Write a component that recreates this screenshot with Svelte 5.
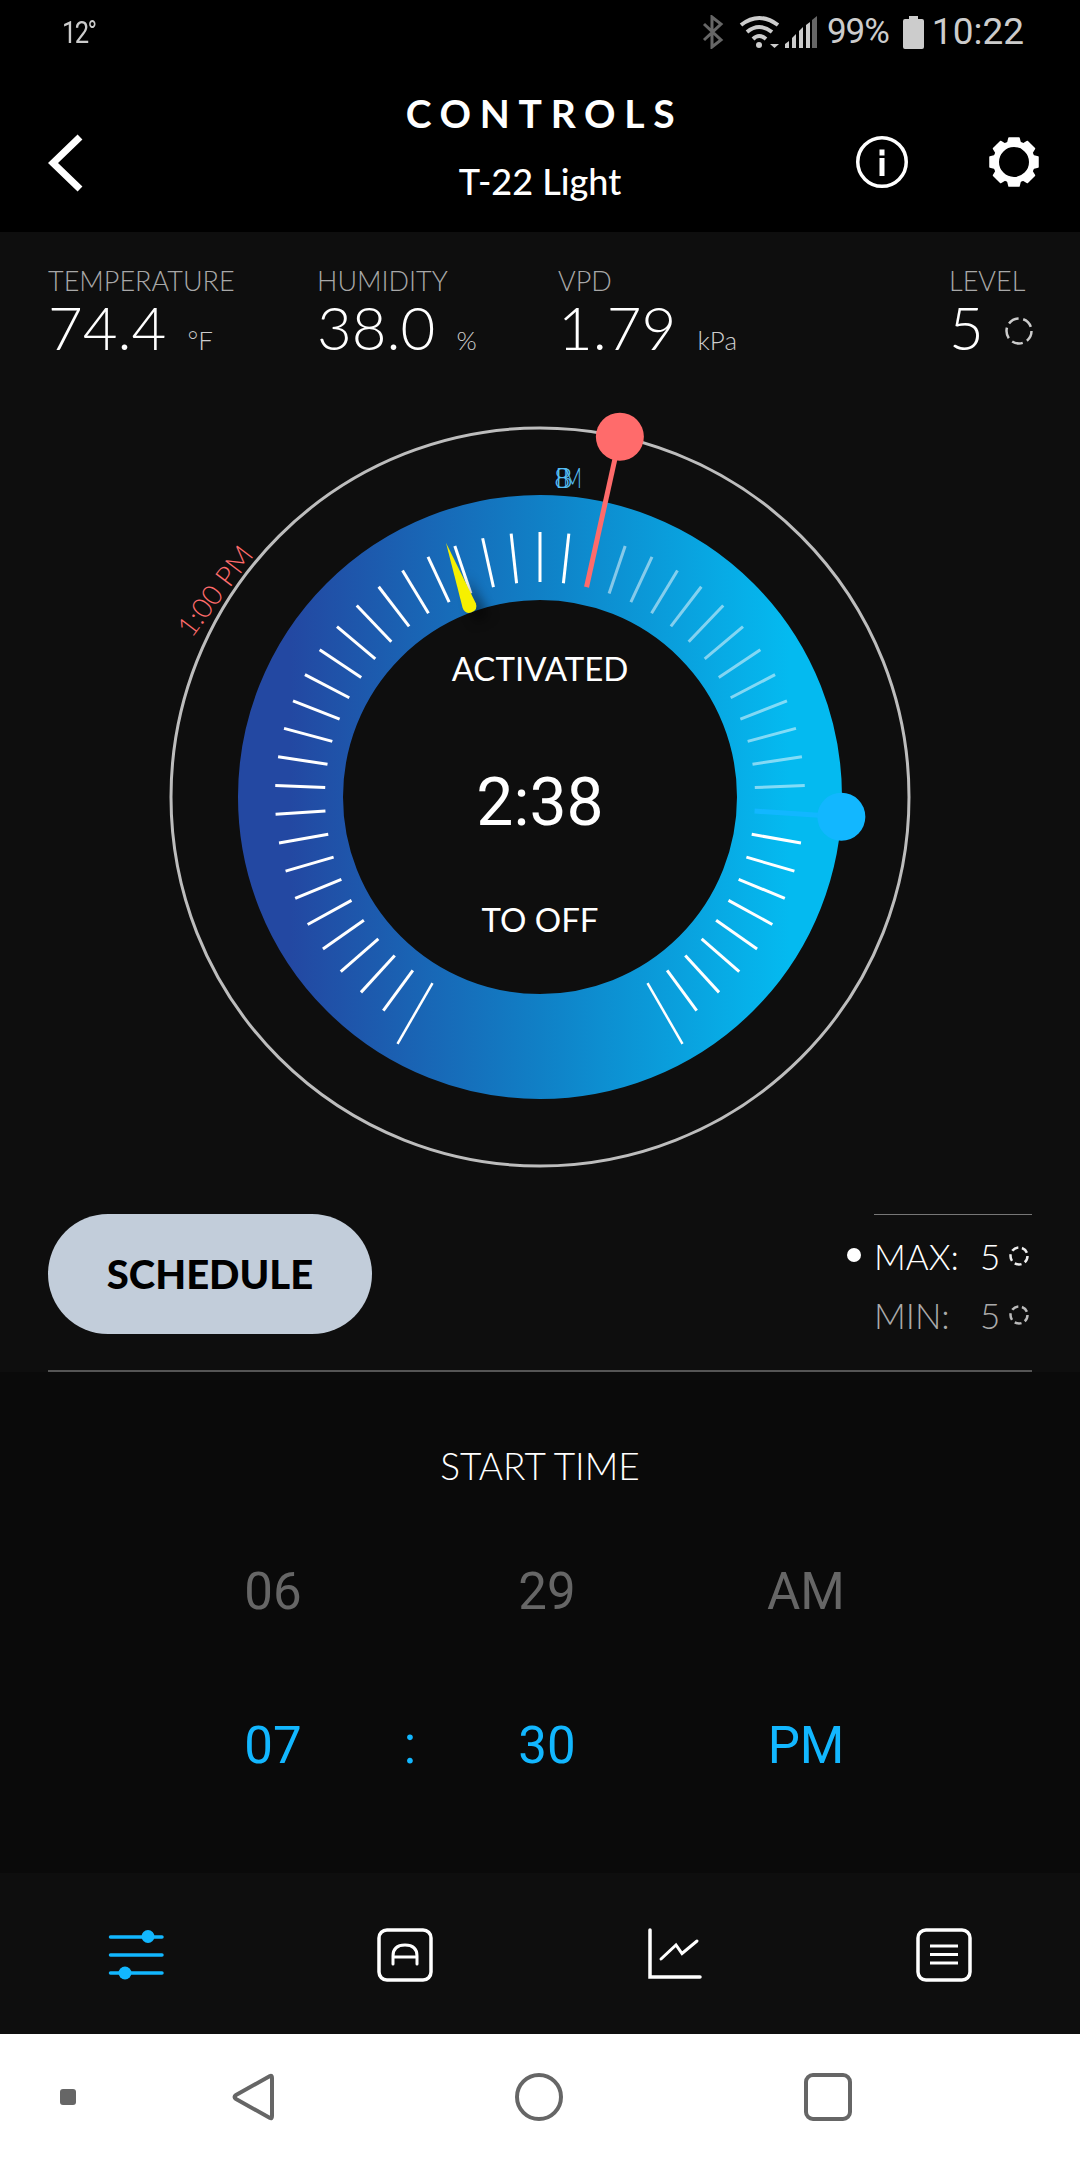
<script>
  const cx = 400
  const cy = 400

  // dial ticks run from -150deg to 150deg, one every 6.25deg
  const ticks = []
  for (let i = -24; i <= 24; i++) {
    const deg = i * 6.25
    const long = Math.abs(i) === 24
    ticks.push({
      ...polarLine(deg, 215, long ? 285 : 265),
      dim: i >= 2 && i <= 14,
      hide: i === 2 || i === 15,
      thin: long
    })
  }

  function polar(deg, r) {
    const a = (deg * Math.PI) / 180
    return { x: cx + r * Math.sin(a), y: cy - r * Math.cos(a) }
  }

  function polarLine(deg, r1, r2) {
    const a = polar(deg, r1)
    const b = polar(deg, r2)
    return { x1: a.x, y1: a.y, x2: b.x, y2: b.y }
  }

  const red = polarLine(12.5, 215, 369)
  const redDot = polar(12.5, 369)
  const blue = polarLine(93.75, 215, 302)
  const blueDot = polar(93.75, 302)

  const stats = [
    { label: 'TEMPERATURE', value: '74.4', unit: '°F', cls: 'temp' },
    { label: 'HUMIDITY', value: '38.0', unit: '%', cls: 'hum' },
    { label: 'VPD', value: '1.79', unit: 'kPa', cls: 'vpd' }
  ]
</script>

<div class="screen">
  <header class="top">
    <div class="status">
      <span class="temp-out">12°</span>
      <div class="status-right">
        <svg class="bt" width="22" height="34" viewBox="0 0 22 34">
          <path d="M2 9 L19 25 L10 32 V2 L19 9 L2 25" fill="none" stroke="#666" stroke-width="3" />
        </svg>
        <svg class="wifi" width="42" height="34" viewBox="0 0 42 34">
          <path d="M2 10 Q20 -4 39 10" fill="none" stroke="#ccc" stroke-width="4" />
          <path d="M8 17 Q20 7 33 17" fill="none" stroke="#ccc" stroke-width="4" />
          <path d="M14 24 Q20 18 27 24" fill="none" stroke="#ccc" stroke-width="4" />
          <circle cx="20" cy="30" r="3" fill="#ccc" />
          <path d="M31 29 H40 L35.5 33 Z" fill="#ccc" />
        </svg>
        <svg class="signal" width="32" height="32" viewBox="0 0 32 32">
          <path d="M0 32 V28 L4 25 V32 Z M7 32 V22 L11 18 V32 Z M14 32 V15 L18 11 V32 Z M21 32 V9 L25 6 V32 Z" fill="#ccc" />
          <path d="M27 32 V4 L32 0 V32 Z" fill="#666" />
        </svg>
        <span class="pct">99%</span>
        <svg class="batt" width="21" height="33" viewBox="0 0 21 33">
          <path d="M6 0 H15 V3 H19 Q21 3 21 5 V31 Q21 33 19 33 H2 Q0 33 0 31 V5 Q0 3 2 3 H6 Z" fill="#ccc" />
        </svg>
        <span class="clock">10:22</span>
      </div>
    </div>
    <div class="titlebar">
      <svg class="back" width="36" height="58" viewBox="0 0 36 58">
        <path d="M32 3 L5 29 L32 55" fill="none" stroke="#fff" stroke-width="7" />
      </svg>
      <div class="title">
        <h1>CONTROLS</h1>
        <p>T-22 Light</p>
      </div>
      <div class="actions">
        <svg width="54" height="54" viewBox="0 0 54 54">
          <circle cx="27" cy="27" r="24.25" fill="none" stroke="#fff" stroke-width="3.5" />
          <rect x="24.5" y="14.5" width="5" height="6" fill="#fff" />
          <rect x="24.5" y="23" width="5" height="18" fill="#fff" />
        </svg>
        <svg width="54" height="54" viewBox="0 0 54 54">
          <g fill="#fff" stroke="#fff" stroke-width="1.5" stroke-linejoin="round">
            {#each [0, 45, 90, 135, 180, 225, 270, 315] as a}
              <path d="M20 11 L22 3 H32 L34 11 Z" transform="rotate({a} 27 27)" />
            {/each}
          </g>
          <circle cx="27" cy="27" r="18" fill="none" stroke="#fff" stroke-width="6" />
        </svg>
      </div>
    </div>
  </header>

  <section class="upper">
    <div class="stats">
      {#each stats as s}
        <div class="stat {s.cls}">
          <span class="label">{s.label}</span>
          <div class="reading"><span class="value">{s.value}</span><span class="unit">{s.unit}</span></div>
        </div>
      {/each}
      <div class="stat level">
        <span class="label">LEVEL</span>
        <div class="reading">
          <span class="value">5</span>
          <svg class="spinner" width="30" height="30" viewBox="0 0 30 30">
            <circle cx="15" cy="15" r="12.5" fill="none" stroke="#ccc" stroke-width="2.5" stroke-dasharray="11 4.7" />
          </svg>
        </div>
      </div>
    </div>

    <svg class="dial" width="800" height="800" viewBox="0 0 800 800">
      <defs>
        <linearGradient id="ring" x1="0" y1="0" x2="1" y2="0">
          <stop offset="0" stop-color="#2348a2" />
          <stop offset="0.5" stop-color="#1080c6" />
          <stop offset="1" stop-color="#04baf0" />
        </linearGradient>
        <filter id="soft" x="-100%" y="-50%" width="300%" height="200%">
          <feGaussianBlur stdDeviation="6" />
        </filter>
      </defs>

      <circle {cx} {cy} r="369" fill="none" stroke="#bdbdbd" stroke-width="3" />
      <circle {cx} {cy} r="249.5" fill="none" stroke="url(#ring)" stroke-width="105" />

      {#each ticks as t}
        {#if !t.hide}
          <line
            x1={t.x1}
            y1={t.y1}
            x2={t.x2}
            y2={t.y2}
            stroke="#fff"
            stroke-width={t.thin ? 2.5 : 3}
            opacity={t.dim ? 0.5 : 1}
          />
        {/if}
      {/each}

      <text class="mark red-mark" transform="translate(83 200) rotate(-53)" text-anchor="middle">1:00 PM</text>
      <text class="mark blue-mark" x="414" y="91">8</text>
      <text class="mark blue-mark" x="415" y="91">B</text>
      <text class="mark blue-mark" transform="translate(423 91) scale(0.75 1)">M</text>

      <g transform="rotate(-20.3 400 400)">
        <path d="M392 205 L408 205 L400 160 Z" fill="#000" opacity="0.5" filter="url(#soft)" transform="translate(7 8)" />
        <path d="M400 129 L407 196 Q407 203 400 203 Q393 203 393 196 Z" fill="#f7f000" />
      </g>

      <line x1={red.x1} y1={red.y1} x2={red.x2} y2={red.y2} stroke="#ff6b6b" stroke-width="5" />
      <circle cx={redDot.x} cy={redDot.y} r="24" fill="#ff6b6b" />

      <line x1={blue.x1} y1={blue.y1} x2={blue.x2} y2={blue.y2} stroke="#12b7ff" stroke-width="5" />
      <circle cx={blueDot.x} cy={blueDot.y} r="24" fill="#12b7ff" />

      <text class="center-label" x="400" y="284" text-anchor="middle">ACTIVATED</text>
      <text class="center-time" x="400" y="428" text-anchor="middle">2:38</text>
      <text class="center-label" x="400" y="535" text-anchor="middle">TO OFF</text>
    </svg>

    <div class="actions-row">
      <button class="schedule">SCHEDULE</button>
      <div class="limits">
        <div class="limit active">
          <span class="dot"></span>
          <span class="name">MAX:</span>
          <span class="num">5</span>
          <svg width="22" height="22" viewBox="0 0 22 22">
            <circle cx="11" cy="11" r="8.5" fill="none" stroke="#eee" stroke-width="2.5" stroke-dasharray="7 3.7" />
          </svg>
        </div>
        <div class="limit">
          <span class="name">MIN:</span>
          <span class="num">5</span>
          <svg width="22" height="22" viewBox="0 0 22 22">
            <circle cx="11" cy="11" r="8.5" fill="none" stroke="#bbb" stroke-width="2.5" stroke-dasharray="7 3.7" />
          </svg>
        </div>
      </div>
    </div>
    <div class="rule"></div>
  </section>

  <section class="picker">
    <h2>START TIME</h2>
    <div class="wheel">
      <span>06</span><span></span><span>29</span><span>AM</span>
      <span class="on">07</span><span class="on">:</span><span class="on">30</span><span class="on">PM</span>
    </div>
  </section>

  <nav class="tabs">
    <svg width="56" height="54" viewBox="0 0 56 54">
      <g stroke="#12b7ff" stroke-width="3.5" stroke-linecap="round">
        <line x1="2.5" y1="9" x2="54" y2="9" />
        <line x1="2.5" y1="27" x2="54" y2="27" />
        <line x1="2.5" y1="45" x2="54" y2="45" />
      </g>
      <circle cx="40" cy="8.5" r="6.5" fill="#12b7ff" />
      <circle cx="17" cy="45" r="6.5" fill="#12b7ff" />
    </svg>
    <svg width="56" height="54" viewBox="0 0 56 54">
      <rect x="2" y="2" width="52" height="50" rx="8" fill="none" stroke="#fff" stroke-width="3.5" />
      <path d="M16 36 V28 Q16 17 28 17 Q40 17 40 28 V36 M16 29 H40" fill="none" stroke="#fff" stroke-width="3" stroke-linecap="round" />
    </svg>
    <svg width="56" height="54" viewBox="0 0 56 54">
      <path d="M3 2 V49 H53" fill="none" stroke="#fff" stroke-width="3.5" stroke-linecap="round" />
      <path d="M14 31 L29 17 L35 25.5 L50 13" fill="none" stroke="#fff" stroke-width="3" stroke-linecap="round" />
    </svg>
    <svg width="56" height="54" viewBox="0 0 56 54">
      <rect x="2" y="2" width="52" height="50" rx="8" fill="none" stroke="#fff" stroke-width="3.5" />
      <g stroke="#fff" stroke-width="3">
        <line x1="14" y1="18" x2="42" y2="18" />
        <line x1="14" y1="26.5" x2="42" y2="26.5" />
        <line x1="14" y1="35" x2="42" y2="35" />
      </g>
    </svg>
  </nav>

  <footer class="sysnav">
    <span class="pip"></span>
    <svg class="nav-back" width="42" height="48" viewBox="0 0 42 48">
      <path d="M38 3 Q40 2 40 5 V43 Q40 46 38 45 L4 26 Q1 24 4 22 Z" fill="none" stroke="#666" stroke-width="4" stroke-linejoin="round" />
    </svg>
    <svg class="nav-home" width="48" height="48" viewBox="0 0 48 48">
      <circle cx="24" cy="24" r="22" fill="none" stroke="#666" stroke-width="4" />
    </svg>
    <svg class="nav-recent" width="48" height="48" viewBox="0 0 48 48">
      <rect x="2" y="2" width="44" height="44" rx="7" fill="none" stroke="#666" stroke-width="4" />
    </svg>
  </footer>
</div>

<style>
  :global(body) {
    margin: 0;
    background: #000;
  }

  .screen {
    width: 1080px;
    height: 2160px;
    display: flex;
    flex-direction: column;
    overflow: hidden;
    font-family: Lato, "Noto Sans", sans-serif;
    color: #fff;
  }

  .top {
    height: 232px;
    background: #000;
    box-sizing: border-box;
    flex: none;
  }

  .status {
    height: 66px;
    box-sizing: border-box;
    padding: 14px 56px 0 62px;
    display: flex;
    justify-content: space-between;
    align-items: flex-start;
    color: #ccc;
    font-family: Roboto, sans-serif;
  }

  .temp-out {
    font-size: 32px;
    line-height: 36px;
    letter-spacing: -2px;
    transform: scaleX(0.8);
    transform-origin: left;
  }

  .status-right {
    display: flex;
    align-items: center;
  }

  .status-right svg {
    display: block;
  }

  .bt {
    margin-right: 15px;
  }

  .wifi {
    margin-right: 4px;
  }

  .pct {
    font-size: 35px;
    line-height: 36px;
    margin: 0 14px 0 10px;
    letter-spacing: -1px;
  }

  .clock {
    font-size: 37px;
    line-height: 36px;
    margin-left: 8px;
  }

  .titlebar {
    display: grid;
    grid-template-columns: 1fr auto 1fr;
    padding: 0 39px;
  }

  .back {
    margin: 68px 0 0 9px;
    display: block;
  }

  .title {
    text-align: center;
  }

  .title h1 {
    margin: 25px -9px 0 0;
    font-size: 39px;
    line-height: 44px;
    font-weight: 700;
    letter-spacing: 8.7px;
  }

  .title p {
    margin: 26px 0 0;
    font-size: 36px;
    line-height: 40px;
    font-weight: 500;
  }

  .actions {
    display: flex;
    justify-content: flex-end;
    gap: 78px;
    align-items: flex-start;
    padding-top: 69px;
  }

  .upper {
    background: #0e0e0e;
    height: 1140px;
    flex: none;
    box-sizing: border-box;
    position: relative;
  }

  .stats {
    height: 165px;
    box-sizing: border-box;
    display: flex;
    padding: 32px 0 0 48px;
  }

  .stat {
    display: flex;
    flex-direction: column;
    flex: none;
  }

  .temp {
    width: 269px;
  }

  .hum {
    width: 241px;
  }

  .vpd {
    width: 391px;
  }

  .label {
    font-size: 27px;
    line-height: 34px;
    font-weight: 300;
    color: #a8a8a8;
  }

  .reading {
    display: flex;
    align-items: baseline;
    margin-top: -5px;
  }

  .value {
    font-size: 60px;
    line-height: 68px;
    font-weight: 300;
  }

  .unit {
    font-size: 26px;
    font-weight: 300;
    color: #ccc;
    margin-left: 21px;
  }

  .spinner {
    margin-left: 20px;
    align-self: center;
    margin-top: 8px;
  }

  .dial {
    display: block;
    margin: 0 auto;
  }

  .mark {
    font-size: 28px;
    font-weight: 300;
  }

  .red-mark {
    fill: #ff6b6b;
  }

  .blue-mark {
    fill: #55bff5;
  }

  .center-label {
    font-size: 33px;
    fill: #fff;
  }

  .center-time {
    font-family: Roboto, sans-serif;
    font-size: 66px;
    fill: #fff;
  }

  .actions-row {
    display: flex;
    justify-content: space-between;
    align-items: flex-start;
    padding: 17px 48px 0;
  }

  .schedule {
    width: 324px;
    height: 120px;
    border: 0;
    border-radius: 60px;
    background: #c2cdda;
    color: #000;
    font-family: Lato, sans-serif;
    font-size: 40px;
    font-weight: 900;
    padding: 0;
  }

  .limits {
    width: 158px;
    border-top: 1px solid #777;
    padding-top: 11px;
  }

  .limit {
    display: flex;
    align-items: center;
    height: 59px;
    position: relative;
    color: #aaa;
    font-size: 35px;
    font-weight: 300;
  }

  .limit.active {
    color: #fff;
  }

  .limit .name {
    width: 106px;
  }

  .limit .num {
    width: 28px;
  }

  .dot {
    position: absolute;
    left: -27px;
    top: 22px;
    width: 14px;
    height: 14px;
    border-radius: 50%;
    background: #fff;
  }

  .rule {
    position: absolute;
    left: 48px;
    right: 48px;
    bottom: 0;
    height: 2px;
    background: #555;
  }

  .picker {
    flex: 1;
    background: #0a0a0a;
    text-align: center;
  }

  .picker h2 {
    margin: 72px 0 0;
    font-size: 37px;
    line-height: 44px;
    font-weight: 300;
  }

  .wheel {
    display: grid;
    grid-template-columns: 200px 74px 200px 318px;
    grid-auto-rows: 154px;
    margin: 26px 0 0 173px;
    justify-items: center;
    align-items: center;
    font-family: Roboto, sans-serif;
    font-size: 51px;
    font-weight: 400;
    color: #666;
  }

  .on {
    color: #12b7ff;
  }

  .tabs {
    height: 161px;
    flex: none;
    background: #0e0e0e;
    box-sizing: border-box;
    display: flex;
    align-items: center;
    padding: 3px 108px 0;
    justify-content: space-between;
  }

  .sysnav {
    height: 126px;
    flex: none;
    background: #fff;
    position: relative;
    display: flex;
    align-items: center;
  }

  .pip {
    width: 16px;
    height: 16px;
    border-radius: 3px;
    background: #666;
    margin-left: 60px;
  }

  .nav-back {
    margin-left: 156px;
  }

  .nav-home {
    margin-left: 241px;
  }

  .nav-recent {
    margin-left: 241px;
  }
</style>
